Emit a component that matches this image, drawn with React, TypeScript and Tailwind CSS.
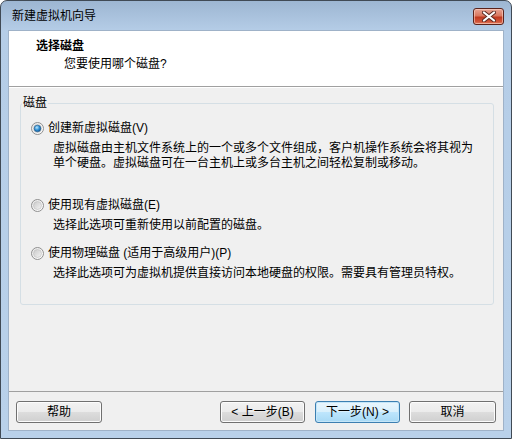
import React from 'react';

const ui = "font-['Liberation_Sans','Noto_Sans_CJK_SC',sans-serif] text-[12px] leading-[15px] text-black";

type Choice = {
  key: string;
  label: string;
  hotkey: string;
  desc: string[];
  checked: boolean;
  gap: string;
};

const choices: Choice[] = [
  {
    key: 'new',
    label: '创建新虚拟磁盘',
    hotkey: '(V)',
    desc: [
      '虚拟磁盘由主机文件系统上的一个或多个文件组成，客户机操作系统会将其视为',
      '单个硬盘。虚拟磁盘可在一台主机上或多台主机之间轻松复制或移动。',
    ],
    checked: true,
    gap: 'mt-0',
  },
  {
    key: 'existing',
    label: '使用现有虚拟磁盘',
    hotkey: '(E)',
    desc: ['选择此选项可重新使用以前配置的磁盘。'],
    checked: false,
    gap: 'mt-[27px]',
  },
  {
    key: 'physical',
    label: '使用物理磁盘 (适用于高级用户)',
    hotkey: '(P)',
    desc: ['选择此选项可为虚拟机提供直接访问本地硬盘的权限。需要具有管理员特权。'],
    checked: false,
    gap: 'mt-[13px]',
  },
];

function Radio({ checked, id }: { checked: boolean; id: string }) {
  return (
    <svg width="13" height="13" viewBox="0 0 13 13" className="shrink-0">
      <defs>
        <linearGradient id={`ring-${id}`} x1="0" y1="0" x2="1" y2="1">
          <stop offset="0" stopColor="#e6e6e6" />
          <stop offset="1" stopColor="#ffffff" />
        </linearGradient>
        <linearGradient id={`in-${id}`} x1="0" y1="0" x2="1" y2="1">
          <stop offset="0" stopColor="#c9c9c9" />
          <stop offset="1" stopColor="#f4f4f4" />
        </linearGradient>
        <radialGradient id={`dot-${id}`} cx="0.4" cy="0.35" r="0.7">
          <stop offset="0" stopColor="#b8e6fc" />
          <stop offset="0.55" stopColor="#2f8fd4" />
          <stop offset="1" stopColor="#0d4f8c" />
        </radialGradient>
      </defs>
      <circle cx="6.5" cy="6.5" r="6" fill={`url(#ring-${id})`} stroke="#8f8f8f" strokeWidth="1" />
      <circle cx="6.5" cy="6.5" r="4" fill={`url(#in-${id})`} stroke="#bdbdbd" strokeWidth="0.6" />
      {checked && <circle cx="6.5" cy="6.5" r="3.3" fill={`url(#dot-${id})`} stroke="#1c5a8e" strokeWidth="0.6" />}
    </svg>
  );
}

function WinButton({ children, primary, className }: { children: React.ReactNode; primary?: boolean; className: string }) {
  const face = primary
    ? 'border-[#3c7fb1] bg-[linear-gradient(#eaf6fd_0%,#d9f0fc_50%,#bee6fd_51%,#a7d9f5_100%)] shadow-[inset_0_0_0_1px_#c5e6f8]'
    : 'border-[#707070] bg-[linear-gradient(#f2f2f2_0%,#ebebeb_50%,#dddddd_51%,#cfcfcf_100%)] shadow-[inset_0_0_0_1px_#fcfcfc]';
  return (
    <button
      type="button"
      className={`h-[22px] rounded-[3px] border ${face} ${ui} flex items-center justify-center ${className}`}
    >
      {children}
    </button>
  );
}

function CloseButton() {
  return (
    <div className="flex h-[17px] w-[31px] items-center justify-center rounded-[3px] border border-[#5b231b] bg-[linear-gradient(#e8a493_0%,#d9775f_45%,#c0391f_55%,#d1563b_85%,#e28466_100%)] shadow-[inset_0_0_0_1px_rgba(255,220,210,0.55)]">
      <svg width="14" height="11" viewBox="0 0 14 11">
        <path d="M2 1.5 L12 9.5 M12 1.5 L2 9.5" stroke="#5a2a22" strokeWidth="4" strokeLinecap="round" />
        <path d="M2 1.5 L12 9.5 M12 1.5 L2 9.5" stroke="#ffffff" strokeWidth="2.2" strokeLinecap="round" />
      </svg>
    </div>
  );
}

export default function App() {
  return (
    <div className="h-[439px] w-[513px] bg-white">
      <div className="flex h-[439px] w-[512px] flex-col rounded-t-[7px] border border-[#404a55] bg-[linear-gradient(#9db6d2_0px,#b5cde7_30px,#b9d1ea_100%)]">
        {/* 标题栏 */}
        <div className="flex h-[29px] items-center pl-[11px] pr-[7px]">
          <span className={`${ui} mt-[2px] text-[#1e1e1e]`}>新建虚拟机向导</span>
          <div className="ml-auto mt-[2px]">
            <CloseButton />
          </div>
        </div>

        {/* 客户区 */}
        <div className="mx-[7px] flex h-[401px] flex-col border border-[#9fb2c8] bg-[#f0f0f0]">
          <div className="h-[55px] bg-white">
            <p className={`${ui} pl-[27px] pt-[8px] font-bold`}>选择磁盘</p>
            <p className={`${ui} pl-[55px] pt-[3px]`}>您要使用哪个磁盘?</p>
          </div>
          <div className="h-px bg-[#a0a0a0]" />
          <div className="h-px bg-white" />

          <fieldset className="ml-[11px] mr-[9px] mt-[8px] h-[209px] rounded-[3px] border border-[#d5dfe5] px-0 pb-0">
            <legend className={`${ui} ml-[1px] px-[1px] leading-[14px]`}>磁盘</legend>
            <div className="flex flex-col pl-[10px] pt-[10px]">
              {choices.map((c) => (
                <div key={c.key} className={c.gap}>
                  <div className="flex items-center gap-[4px]">
                    <Radio checked={c.checked} id={c.key} />
                    <span className={ui}>
                      {c.label}
                      {c.hotkey}
                    </span>
                  </div>
                  <div className="mt-[5px] pl-[22px]">
                    {c.desc.map((line) => (
                      <p key={line} className={ui}>
                        {line}
                      </p>
                    ))}
                  </div>
                </div>
              ))}
            </div>
          </fieldset>

          <div className="flex-1" />
          <div className="h-px bg-[#a0a0a0]" />
          <div className="flex items-center pb-[7px] pt-[9px]">
            <WinButton className="ml-[7px] w-[86px]">帮助</WinButton>
            <WinButton className="ml-auto w-[85px]">&lt; 上一步(B)</WinButton>
            <WinButton primary className="ml-[10px] w-[85px]">
              下一步(N) &gt;
            </WinButton>
            <WinButton className="ml-[9px] mr-[7px] w-[87px]">取消</WinButton>
          </div>
        </div>
      </div>
    </div>
  );
}
